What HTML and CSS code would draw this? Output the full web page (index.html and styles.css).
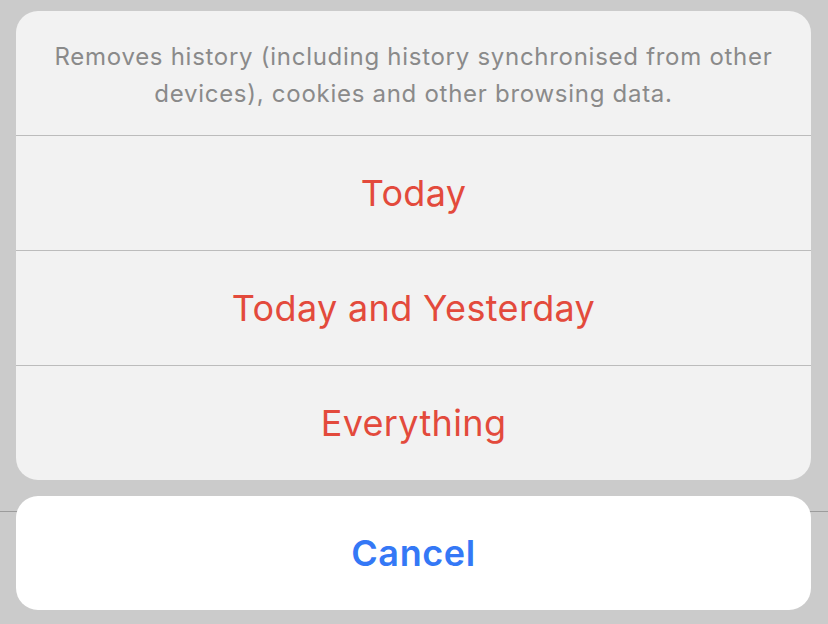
FILE: index.html
```html
<!DOCTYPE html>
<html>
<head>
<meta charset="utf-8">
<link rel="stylesheet" href="styles.css">
</head>
<body>
<div class="screen">
  <div class="backline"></div>
  <div class="sheet">
    <div class="group">
      <div class="header">Removes history (including history synchronised from other devices), cookies and other browsing data.</div>
      <div class="action">Today</div>
      <div class="action">Today and Yesterday</div>
      <div class="action">Everything</div>
    </div>
    <div class="cancel">Cancel</div>
  </div>
</div>
</body>
</html>
```
FILE: styles.css
```css
html, body {
  margin: 0;
  padding: 0;
}
body {
  width: 828px;
  height: 624px;
  overflow: hidden;
  background: #cbcbcb;
  font-family: Inter, "Noto Sans", sans-serif;
}
.screen {
  position: relative;
  width: 828px;
  height: 624px;
}
.backline {
  position: absolute;
  left: 0;
  right: 0;
  top: 511px;
  height: 1px;
  background: #9c9c9c;
}
.sheet {
  position: relative;
  padding: 11px 17px 0 16px;
  display: flex;
  flex-direction: column;
  gap: 16px;
}
.group {
  background: #f2f2f2;
  border-radius: 22px;
  overflow: hidden;
}
.header {
  height: 124px;
  box-sizing: border-box;
  padding: 3px 20px 0;
  display: flex;
  align-items: center;
  justify-content: center;
  text-align: center;
  color: #8a8a8a;
  font-size: 24px;
  line-height: 37px;
  letter-spacing: 0.72px;
}
.action {
  height: 115px;
  border-top: 1px solid #bcbcbc;
  box-sizing: border-box;
  display: flex;
  align-items: center;
  justify-content: center;
  color: #e34a3c;
  font-size: 36px;
  letter-spacing: 0.35px;
}
.cancel {
  height: 114px;
  background: #ffffff;
  border-radius: 22px;
  display: flex;
  align-items: center;
  justify-content: center;
  color: #3478f6;
  font-size: 36px;
  font-weight: 600;
  letter-spacing: 0.6px;
}
```
